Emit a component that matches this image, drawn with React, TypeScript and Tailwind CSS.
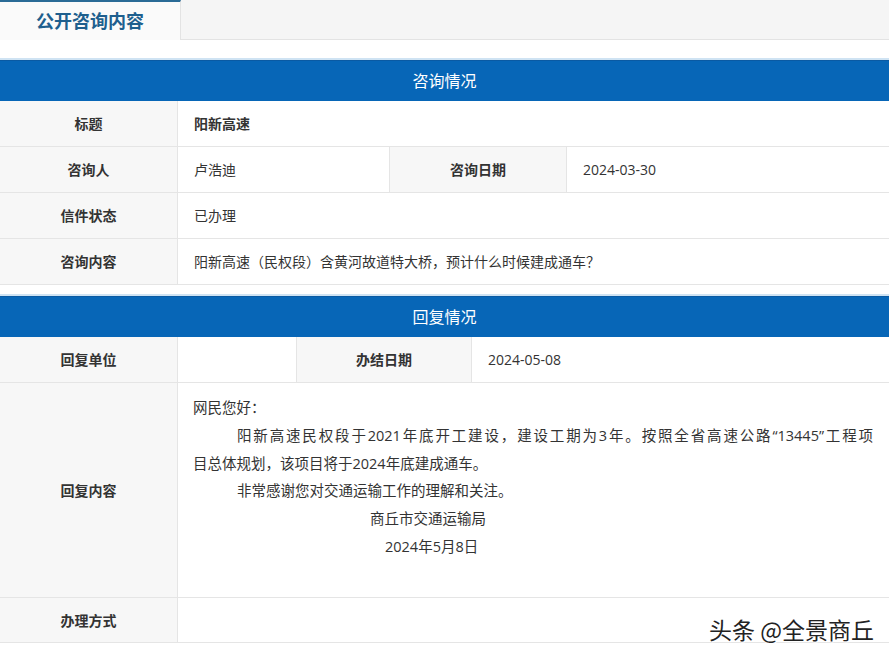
import React from "react";

const font = { fontFamily: '"Open Sans", "Noto Sans CJK SC", sans-serif' };

function Label({ children, className = "" }: { children?: React.ReactNode; className?: string }) {
  return (
    <div className={`flex items-center justify-center bg-[#f7f7f7] font-bold text-[#333] ${className}`}>
      {children}
    </div>
  );
}

function Value({ children, className = "" }: { children?: React.ReactNode; className?: string }) {
  return <div className={`flex items-center bg-white pl-[16px] text-[#333] ${className}`}>{children}</div>;
}

function Bar({ title }: { title: string }) {
  return (
    <div className="border-t-[2px] border-[#cfe3f3]">
      <div className="flex h-[41px] items-center justify-center border-t border-[#0a5aa3] bg-[#0766b7] text-[16px] text-white">
        {title}
      </div>
    </div>
  );
}

export default function App() {
  return (
    <div className="relative h-[660px] w-[893px] bg-white text-[14px]" style={font}>
      <div className="flex h-[40px] w-[889px]">
        <div className="flex w-[181px] items-center justify-center border-t-[2px] border-r border-[#2a6b96] border-r-[#e3e3e3] bg-[#fafafa] text-[18px] font-bold text-[#1e5f8e]">
          公开咨询内容
        </div>
        <div className="flex-1 border-b border-[#e3e3e3] bg-[#f5f5f5]" />
      </div>

      <div className="mt-[18px] w-[889px]">
        <Bar title="咨询情况" />
        <div className="grid h-[46px] grid-cols-[178px_1fr] border-b border-[#e5e5e5]">
          <Label className="border-r border-[#e5e5e5]">标题</Label>
          <Value className="font-bold">阳新高速</Value>
        </div>
        <div className="grid h-[46px] grid-cols-[178px_212px_177px_1fr] border-b border-[#e5e5e5]">
          <Label className="border-r border-[#e5e5e5]">咨询人</Label>
          <Value className="border-r border-[#e5e5e5]">卢浩迪</Value>
          <Label className="border-r border-[#e5e5e5]">咨询日期</Label>
          <Value>2024-03-30</Value>
        </div>
        <div className="grid h-[46px] grid-cols-[178px_1fr] border-b border-[#e5e5e5]">
          <Label className="border-r border-[#e5e5e5]">信件状态</Label>
          <Value>已办理</Value>
        </div>
        <div className="grid h-[46px] grid-cols-[178px_1fr] border-b border-[#e5e5e5]">
          <Label className="border-r border-[#e5e5e5]">咨询内容</Label>
          <Value>阳新高速（民权段）含黄河故道特大桥，预计什么时候建成通车？</Value>
        </div>
      </div>

      <div className="mt-[9px] w-[889px]">
        <Bar title="回复情况" />
        <div className="grid h-[46px] grid-cols-[178px_119px_175px_1fr] border-b border-[#e5e5e5]">
          <Label className="border-r border-[#e5e5e5]">回复单位</Label>
          <Value className="border-r border-[#e5e5e5]"></Value>
          <Label className="border-r border-[#e5e5e5]">办结日期</Label>
          <Value>2024-05-08</Value>
        </div>
        <div className="grid h-[215px] grid-cols-[178px_1fr] border-b border-[#e5e5e5]">
          <Label className="border-r border-[#e5e5e5]">回复内容</Label>
          <div className="bg-white pl-[15px] pr-[16px] pt-[11px] text-[14.5px] leading-[27.8px] text-[#333]">
            <p>网民您好：</p>
            <p className="indent-[44px] [text-align-last:justify] text-justify">
              阳新高速民权段于2021年底开工建设，建设工期为3年。按照全省高速公路“13445”工程项
            </p>
            <p>目总体规划，该项目将于2024年底建成通车。</p>
            <p className="indent-[44px]">非常感谢您对交通运输工作的理解和关注。</p>
            <p className="pl-[177px]">商丘市交通运输局</p>
            <p className="pl-[192px]">2024年5月8日</p>
          </div>
        </div>
        <div className="grid h-[45px] grid-cols-[178px_1fr] border-b border-[#e5e5e5]">
          <Label className="border-r border-[#e5e5e5]">办理方式</Label>
          <Value></Value>
        </div>
      </div>

      <div
        className="absolute left-[709px] top-[614px] text-[23px] leading-[30px] text-[#222]"
        style={{ fontFamily: '"Noto Sans CJK SC", sans-serif', textShadow: "0 0 2px #fff, 0 0 2px #fff, 1px 1px 1px #fff" }}
      >
        头条 @全景商丘
      </div>
    </div>
  );
}
